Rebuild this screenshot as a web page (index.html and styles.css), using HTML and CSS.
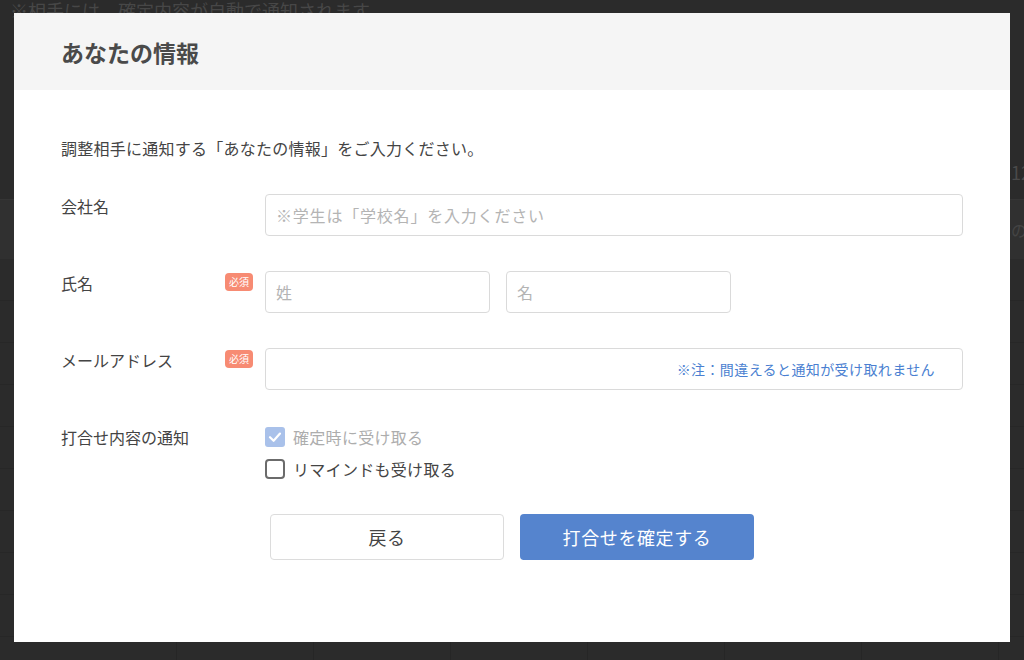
FILE: index.html
```html
<!DOCTYPE html>
<html lang="ja">
<head>
<meta charset="utf-8">
<title>あなたの情報</title>
<link rel="stylesheet" href="styles.css">
</head>
<body>
<div class="page">
  <p class="page-note">※相手には、確定内容が自動で通知されます</p>
  <div class="cal">
    <div class="cal-row cal-dates"><span class="cal-date">12</span></div>
    <div class="cal-row cal-head"><span class="cal-head-text">の予定</span></div>
    <div class="cal-body"></div>
  </div>
</div>

<div class="modal">
  <div class="modal-header">
    <h2 class="modal-title">あなたの情報</h2>
  </div>
  <div class="modal-body">
    <p class="intro">調整相手に通知する「あなたの情報」をご入力ください。</p>

    <div class="form-row">
      <div class="form-label">会社名</div>
      <div class="badge-slot"></div>
      <div class="field">
        <input class="input input-full" type="text" placeholder="※学生は「学校名」を入力ください">
      </div>
    </div>

    <div class="form-row">
      <div class="form-label">氏名</div>
      <div class="badge-slot"><span class="badge">必須</span></div>
      <div class="field">
        <input class="input input-half" type="text" placeholder="姓">
        <input class="input input-half" type="text" placeholder="名">
      </div>
    </div>

    <div class="form-row">
      <div class="form-label">メールアドレス</div>
      <div class="badge-slot"><span class="badge">必須</span></div>
      <div class="field">
        <div class="input-box">
          <input class="bare-input" type="email">
          <span class="input-note">※注：間違えると通知が受け取れません</span>
        </div>
      </div>
    </div>

    <div class="form-row form-row-last">
      <div class="form-label">打合せ内容の通知</div>
      <div class="badge-slot"></div>
      <div class="checks">
        <label class="check check-disabled">
          <span class="box box-checked">
            <svg width="20" height="20" viewBox="0 0 20 20"><polyline points="5,10.2 8.6,13.8 15,6.6" fill="none" stroke="#fff" stroke-width="2.2" stroke-linecap="round" stroke-linejoin="round"/></svg>
          </span>
          <span>確定時に受け取る</span>
        </label>
        <label class="check">
          <span class="box box-empty"></span>
          <span>リマインドも受け取る</span>
        </label>
      </div>
    </div>

    <div class="actions">
      <button class="btn btn-secondary" type="button">戻る</button>
      <button class="btn btn-primary" type="button">打合せを確定する</button>
    </div>
  </div>
</div>
</body>
</html>
```
FILE: styles.css
```css
html, body {
  margin: 0;
  padding: 0;
  width: 1024px;
  height: 660px;
  overflow: hidden;
}

body {
  background: #2b2b2b;
  font-family: "Noto Sans CJK JP", "Noto Sans", sans-serif;
  color: #444;
}

/* underlying page (dimmed) */
.page {
  width: 1024px;
  height: 660px;
}

.page-note {
  margin: 0;
  padding-left: 10px;
  font-size: 18px;
  line-height: 20px;
  color: #474747;
  white-space: nowrap;
}

.cal {
  margin-top: 140px;
}

.cal-row {
  display: grid;
  grid-template-columns: 40px repeat(7, 137px) 1fr;
}

.cal-dates {
  height: 39px;
}

.cal-date {
  grid-column: 9;
  padding-left: 12px;
  font-size: 18px;
  line-height: 24px;
  color: #4a4a4a;
  white-space: nowrap;
}

.cal-head {
  height: 59px;
  background: #303030;
  border-top: 1px solid #353535;
  align-items: center;
}

.cal-head-text {
  grid-column: 9;
  padding-left: 12px;
  font-size: 16px;
  color: #444;
  white-space: nowrap;
}

.cal-body {
  height: 402px;
  background-image:
    repeating-linear-gradient(to right, transparent 0 136px, #262626 136px 137px),
    repeating-linear-gradient(to bottom, transparent 0 41px, #272727 41px 42px);
  background-position: 40px 0, 0 0;
}

/* modal */
.modal {
  position: fixed;
  left: 14px;
  top: 13px;
  width: 996px;
  height: 629px;
  background: #fff;
}

.modal-header {
  height: 77px;
  background: #f5f5f5;
  display: flex;
  align-items: center;
  padding: 0 47px;
}

.modal-title {
  margin: 0;
  font-size: 23px;
  font-weight: 700;
  color: #4a4a4a;
  line-height: 30px;
}

.modal-body {
  padding: 46px 47px 0;
}

.intro {
  margin: 0 0 34px;
  font-size: 16px;
  line-height: 24px;
  letter-spacing: 0.25px;
  color: #444;
}

.form-row {
  display: flex;
  align-items: flex-start;
  margin-bottom: 35px;
}

.form-row-last {
  margin-bottom: 0;
}

.form-label {
  width: 164px;
  flex-shrink: 0;
  font-size: 16px;
  line-height: 24px;
  color: #444;
}

.badge-slot {
  width: 40px;
  flex-shrink: 0;
  padding-top: 2px;
  line-height: 0;
}

.badge {
  display: inline-block;
  width: 28px;
  height: 18px;
  line-height: 18px;
  border-radius: 4px;
  background: #f78b73;
  color: #fff;
  font-size: 10px;
  text-align: center;
}

.field {
  flex: 1;
  display: flex;
  gap: 16px;
}

.input {
  box-sizing: border-box;
  height: 42px;
  border: 1px solid #dadada;
  border-radius: 4px;
  padding: 0 10px;
  font-family: inherit;
  font-size: 16px;
  color: #444;
  background: #fff;
  outline: none;
}

.input::placeholder {
  color: #b4b4b4;
  letter-spacing: 0.8px;
}

.input-full {
  width: 100%;
}

.input-half {
  width: 225px;
}

.input-box {
  box-sizing: border-box;
  width: 100%;
  height: 42px;
  border: 1px solid #dadada;
  border-radius: 4px;
  display: flex;
  align-items: center;
  padding: 0 27px 0 10px;
}

.bare-input {
  flex: 1;
  min-width: 0;
  border: none;
  outline: none;
  font-family: inherit;
  font-size: 16px;
  background: transparent;
}

.input-note {
  font-size: 14px;
  letter-spacing: 0.4px;
  color: #4a7fd1;
  white-space: nowrap;
}

.checks {
  display: flex;
  flex-direction: column;
  gap: 8px;
}

.check {
  display: flex;
  align-items: center;
  gap: 8px;
  font-size: 16px;
  line-height: 24px;
  letter-spacing: 0.3px;
  color: #444;
}

.check-disabled {
  color: #adadad;
}

.box {
  box-sizing: border-box;
  width: 20px;
  height: 20px;
  display: block;
}

.box svg {
  display: block;
}

.box-checked {
  background: #a9c1ea;
  border-radius: 3px;
}

.box-empty {
  border: 2px solid #6b6b6b;
  border-radius: 4px;
}

.actions {
  margin-top: 33px;
  display: flex;
  justify-content: center;
  gap: 16px;
}

.btn {
  box-sizing: border-box;
  width: 234px;
  height: 46px;
  border-radius: 4px;
  font-family: inherit;
  font-size: 18px;
  letter-spacing: 0.6px;
  cursor: pointer;
}

.btn-secondary {
  background: #fff;
  border: 1px solid #dcdcdc;
  color: #444;
}

.btn-primary {
  background: #5584ce;
  border: none;
  color: #fff;
}
```
